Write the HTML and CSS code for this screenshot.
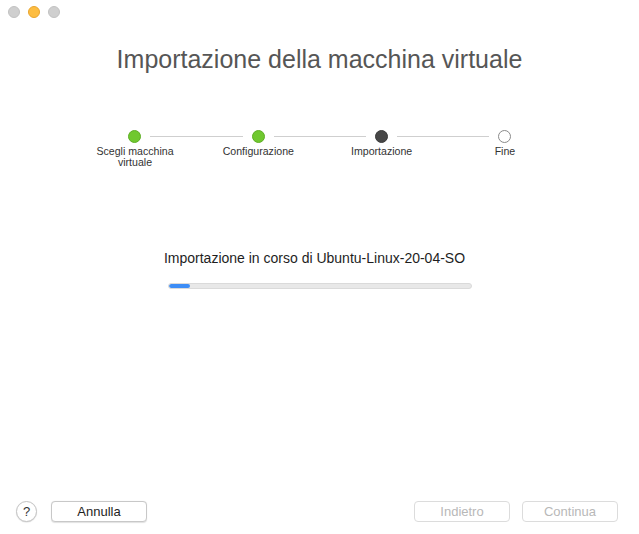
FILE: index.html
```html
<!DOCTYPE html>
<html lang="it">
<head>
<meta charset="utf-8">
<title>Importazione della macchina virtuale</title>
<link rel="stylesheet" href="styles.css">
</head>
<body>
<div class="window">
  <div class="titlebar">
    <span class="light grey"></span>
    <span class="light orange"></span>
    <span class="light grey"></span>
  </div>
  <h1 class="title">Importazione della macchina virtuale</h1>
  <div class="steps">
    <div class="step">
      <div class="track"><span class="seg hidden"></span><span class="dot done"></span><span class="seg"></span></div>
      <div class="label">Scegli macchina<br>virtuale</div>
    </div>
    <div class="step">
      <div class="track"><span class="seg"></span><span class="dot done"></span><span class="seg"></span></div>
      <div class="label">Configurazione</div>
    </div>
    <div class="step">
      <div class="track"><span class="seg"></span><span class="dot current"></span><span class="seg"></span></div>
      <div class="label">Importazione</div>
    </div>
    <div class="step">
      <div class="track"><span class="seg"></span><span class="dot todo"></span><span class="seg hidden"></span></div>
      <div class="label">Fine</div>
    </div>
  </div>
  <div class="progress-area">
    <div class="status">Importazione in corso di Ubuntu-Linux-20-04-SO</div>
    <div class="bar"><div class="fill" style="width: 7%"></div></div>
  </div>
  <div class="footer">
    <div class="left">
      <button class="help">?</button>
      <button class="btn">Annulla</button>
    </div>
    <div class="right">
      <button class="btn disabled">Indietro</button>
      <button class="btn disabled">Continua</button>
    </div>
  </div>
</div>
</body>
</html>
```
FILE: styles.css
```css
* { box-sizing: border-box; }
html, body { margin: 0; padding: 0; background: #ffffff; }
body { font-family: "Liberation Sans", Arial, sans-serif; }
.window {
  width: 639px;
  height: 534px;
  display: flex;
  flex-direction: column;
  background: #ffffff;
}
.titlebar {
  height: 24px;
  display: flex;
  align-items: center;
  gap: 8px;
  padding-left: 8px;
}
.light {
  width: 12px;
  height: 12px;
  border-radius: 50%;
  display: block;
}
.light.grey { background: #cfcfcf; border: 1px solid #c2c2c2; }
.light.orange { background: #fdbd41; border: 1px solid #e9a52e; }
.title {
  margin: 20px 0 0 0;
  font-weight: normal;
  font-size: 25px;
  line-height: 30px;
  color: #565656;
  text-align: center;
}
.steps {
  margin-top: 55px;
  margin-left: 73.3px;
  display: grid;
  grid-template-columns: repeat(4, 123.33px);
}
.step { display: flex; flex-direction: column; align-items: center; }
.track {
  width: 100%;
  display: flex;
  align-items: center;
  height: 14px;
}
.seg { flex: 1; height: 1px; background: #cfcfcf; }
.seg:first-child { margin-right: 9px; }
.seg:last-child { margin-left: 9px; }
.seg.hidden { background: transparent; }
.dot {
  width: 13px;
  height: 13px;
  border-radius: 50%;
  display: block;
  flex: none;
}
.dot.done { background: #70c82f; border: 1px solid #5eae25; }
.dot.current { background: #474747; border: 1px solid #3a3a3a; }
.dot.todo { background: #ffffff; border: 1px solid #8a8a8a; }
.label {
  margin-top: 3px;
  font-size: 10.6px;
  line-height: 11px;
  color: #333;
  text-align: center;
}
.progress-area {
  margin-top: 82px;
  display: flex;
  flex-direction: column;
  align-items: center;
  padding-right: 10px;
}
.status {
  font-size: 14px;
  line-height: 16px;
  color: #1e1e1e;
}
.bar {
  margin-top: 17px;
  margin-left: 10px;
  width: 304px;
  height: 6px;
  border-radius: 3px;
  background: #e8e8e8;
  border: 1px solid #dadada;
  overflow: hidden;
}
.fill { height: 100%; background: #3d8df6; border-radius: 3px; }
.footer {
  margin-top: auto;
  display: flex;
  justify-content: space-between;
  align-items: center;
  padding: 0 21px 12px 16px;
}
.left, .right { display: flex; align-items: center; }
.right { gap: 12px; }
.help {
  width: 21px;
  height: 21px;
  border-radius: 50%;
  border: 1px solid #c4c4c4;
  background: #fff;
  font-family: "Liberation Sans", Arial, sans-serif;
  font-size: 13px;
  color: #333;
  padding: 0;
  margin-right: 14px;
  box-shadow: 0 0.5px 1px rgba(0,0,0,0.15);
}
.btn {
  width: 96px;
  height: 21px;
  border-radius: 4px;
  border: 1px solid #c8c8c8;
  background: #fff;
  font-family: "Liberation Sans", Arial, sans-serif;
  font-size: 13px;
  color: #1e1e1e;
  padding: 0;
  box-shadow: 0 0.5px 1px rgba(0,0,0,0.12);
}
.btn.disabled { color: #b8b8b8; border-color: #dcdcdc; box-shadow: none; }
```
